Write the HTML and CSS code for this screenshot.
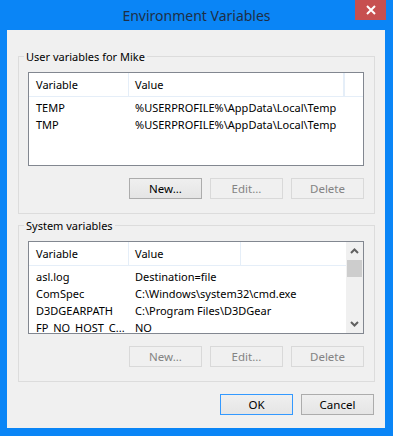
FILE: index.html
```html
<!DOCTYPE html>
<html lang="en">
<head>
  <meta charset="UTF-8" />
  <title>Environment Variables</title>
  <link rel="stylesheet" href="styles.css">
</head>
<body>
  <div class="window">
    <div class="titlebar">
      <span class="title">Environment Variables</span>
      <button class="close" aria-label="Close">
        <svg width="10" height="10" viewBox="0 0 10 10"><path d="M1 1L9 9M9 1L1 9" stroke="#fff" stroke-width="2"/></svg>
      </button>
    </div>

    <div class="client">
      <fieldset class="group user-group">
        <legend>User variables for Mike</legend>
        <div class="list user-list">
          <div class="list-head">
            <div class="col-var">Variable</div>
            <div class="col-val">Value</div>
            <div class="col-rest"></div>
          </div>
          <div class="row"><div class="col-var">TEMP</div><div class="col-val">%USERPROFILE%\AppData\Local\Temp</div></div>
          <div class="row"><div class="col-var">TMP</div><div class="col-val">%USERPROFILE%\AppData\Local\Temp</div></div>
        </div>
        <div class="buttons">
          <button class="btn">New...</button>
          <button class="btn" disabled>Edit...</button>
          <button class="btn" disabled>Delete</button>
        </div>
      </fieldset>

      <fieldset class="group sys-group">
        <legend>System variables</legend>
        <div class="list sys-list">
          <div class="list-body">
            <div class="list-head">
              <div class="col-var">Variable</div>
              <div class="col-val">Value</div>
              <div class="col-rest"></div>
            </div>
            <div class="row"><div class="col-var">asl.log</div><div class="col-val">Destination=file</div></div>
            <div class="row"><div class="col-var">ComSpec</div><div class="col-val">C:\Windows\system32\cmd.exe</div></div>
            <div class="row"><div class="col-var">D3DGEARPATH</div><div class="col-val">C:\Program Files\D3DGear</div></div>
            <div class="row"><div class="col-var">FP_NO_HOST_C...</div><div class="col-val">NO</div></div>
          </div>
          <div class="scrollbar">
            <svg class="arrow" width="9" height="6" viewBox="0 0 9 6"><path d="M1 5L4.5 1.5L8 5" fill="none" stroke="#606060" stroke-width="2"/></svg>
            <div class="thumb"></div>
            <div class="track"></div>
            <svg class="arrow" width="9" height="6" viewBox="0 0 9 6"><path d="M1 1L4.5 4.5L8 1" fill="none" stroke="#606060" stroke-width="2"/></svg>
          </div>
        </div>
        <div class="buttons">
          <button class="btn" disabled>New...</button>
          <button class="btn" disabled>Edit...</button>
          <button class="btn" disabled>Delete</button>
        </div>
      </fieldset>

      <div class="buttons dialog-buttons">
        <button class="btn default">OK</button>
        <button class="btn">Cancel</button>
      </div>
    </div>
  </div>
</body>
</html>
```

FILE: styles.css
```css
*, *::before, *::after {
  box-sizing: border-box;
}

body {
  margin: 0;
  font-family: 'Noto Sans', 'Open Sans', sans-serif;
  font-size: 11px;
  line-height: 15px;
  color: #000;
}

.window {
  width: 393px;
  height: 436px;
  background: #0a85f6;
  display: flex;
  flex-direction: column;
  position: relative;
}

.titlebar {
  height: 30px;
  display: flex;
  justify-content: center;
  align-items: center;
}

.title {
  font-size: 14px;
  color: #1f2f45;
  margin-top: 1px;
}

.close {
  position: absolute;
  top: 0;
  right: 7px;
  width: 31px;
  height: 20px;
  border: none;
  padding: 0;
  background: #c75050;
  display: flex;
  align-items: center;
  justify-content: center;
}

.client {
  margin: 0 8px 8px 7px;
  height: 398px;
  background: #f0f0f0;
  padding: 19px 10px 0 11px;
}

.group {
  margin: 0;
  border: 1px solid #dcdcdc;
  padding: 8px 10px 14px 9px;
  min-width: 0;
}

.group legend {
  padding: 0 2px;
  margin-left: -4px;
  line-height: 15px;
}

.sys-group {
  margin-top: 4px;
  padding-top: 8px;
}

.list {
  background: #fff;
  border: 1px solid #828790;
}

.user-list {
  height: 94px;
}

.sys-list {
  height: 93px;
  display: flex;
  overflow: hidden;
}

.list-body {
  flex: 1;
  min-width: 0;
}

.list-head {
  display: flex;
  height: 24px;
  border-bottom: 1px solid #e5eef8;
  align-items: stretch;
}

.list-head > div {
  display: flex;
  align-items: center;
  border-right: 1px solid #e5eef8;
}

.list-head .col-rest {
  width: 0;
  flex: 1;
  border-right: none;
}

.user-list .list-head .col-rest {
  flex: none;
  width: 19px;
  border-left: 1px solid #e5eef8;
  margin-left: auto;
}

.col-var {
  width: 100px;
  padding-left: 7px;
  flex: none;
  white-space: nowrap;
  overflow: hidden;
}

.col-val {
  padding-left: 6px;
  white-space: nowrap;
}

.list-head .col-val {
  width: 216px;
}

.sys-list .list-head .col-val {
  flex: 1;
}

.row {
  display: flex;
  height: 17px;
  align-items: center;
}

.list-head + .row {
  margin-top: 2px;
}

.scrollbar {
  width: 17px;
  flex: none;
  background: #f0f0f0;
  display: flex;
  flex-direction: column;
  align-items: center;
}

.scrollbar .arrow {
  margin: 6px 0;
}

.thumb {
  width: 15px;
  height: 17px;
  background: #cdcdcd;
}

.track {
  flex: 1;
}

.buttons {
  display: flex;
  justify-content: flex-end;
  gap: 8px;
  margin-top: 12px;
}

.btn {
  width: 73px;
  height: 21px;
  padding: 0;
  font-family: inherit;
  font-size: 11.5px;
  color: #000;
  background: linear-gradient(#efefef, #e5e5e5);
  border: 1px solid #acacac;
}

.btn:disabled {
  color: #838383;
  background: #f0f0f0;
  border-color: #d9d9d9;
}

.btn.default {
  border-color: #3399ff;
}

.dialog-buttons {
  margin-top: 12px;
  margin-right: 1px;
}
```
